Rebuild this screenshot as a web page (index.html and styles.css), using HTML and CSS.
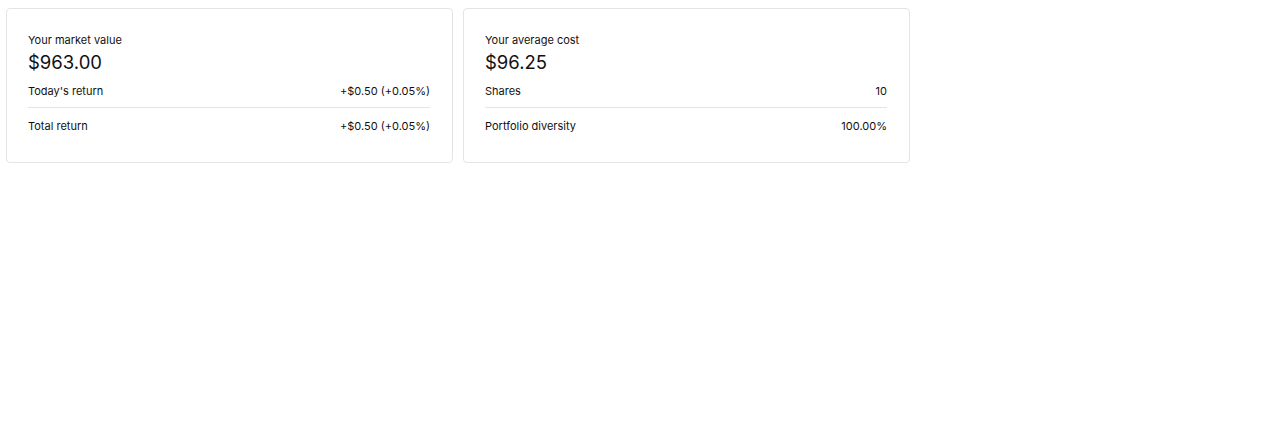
FILE: index.html
```html
<!DOCTYPE html>
<html>
<head>
<meta charset="utf-8">
<link rel="stylesheet" href="styles.css">
</head>
<body>
<div class="cards">
  <section class="card">
    <div class="label">Your market value</div>
    <div class="value">$963.00</div>
    <div class="row"><span>Today's return</span><span>+$0.50 (+0.05%)</span></div>
    <div class="row"><span>Total return</span><span>+$0.50 (+0.05%)</span></div>
  </section>
  <section class="card">
    <div class="label">Your average cost</div>
    <div class="value">$96.25</div>
    <div class="row"><span>Shares</span><span>10</span></div>
    <div class="row"><span>Portfolio diversity</span><span>100.00%</span></div>
  </section>
</div>
</body>
</html>
```
FILE: styles.css
```css
html, body {
  margin: 0;
  background: #fff;
}
body {
  font-family: Inter, "Noto Sans", sans-serif;
  color: #111;
}
.cards {
  display: grid;
  grid-template-columns: 447px 447px;
  gap: 10px;
  padding: 8px 0 0 6px;
}
.card {
  box-sizing: border-box;
  height: 155px;
  border: 1px solid #e4e4e4;
  border-radius: 4px;
  padding: 23px 22px 0 21px;
}
.label {
  font-size: 11px;
  line-height: 16px;
}
.value {
  margin-top: 2px;
  font-size: 18.5px;
  line-height: 24px;
}
.row {
  display: flex;
  justify-content: space-between;
  font-size: 11px;
  line-height: 16px;
  padding: 9px 0 8px;
}
.row + .row {
  border-top: 1px solid #e4e4e4;
  padding-top: 10px;
}
```
